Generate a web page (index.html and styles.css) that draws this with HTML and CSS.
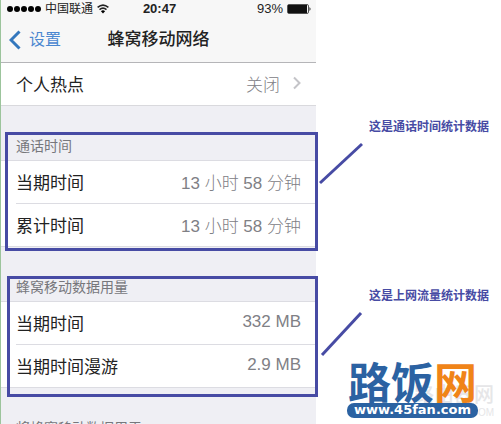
FILE: index.html
```html
<!doctype html>
<html lang="zh-CN">
<head>
<meta charset="utf-8">
<title>蜂窝移动网络</title>
<link rel="stylesheet" href="styles.css">
</head>
<body>
<div class="page">
	<div class="phone">
		<div class="status">
			<div class="carrier">
				<svg class="signal" width="34" height="8" viewBox="0 0 34 8"><circle cx="3" cy="4" r="3"/><circle cx="10" cy="4" r="3"/><circle cx="17" cy="4" r="3"/><circle cx="24" cy="4" r="3"/><circle cx="31" cy="4" r="3"/></svg>
				<span>中国联通</span>
				<svg class="wifi" width="12" height="10" viewBox="0 0 12 10"><path d="M.6 3.4Q6-1.2 11.4 3.4M2.5 5.6Q6 2.6 9.5 5.6" fill="none" stroke="#222" stroke-width="1.5"/><path d="M3.9 7.2Q6 5.4 8.1 7.2L6 9.5z"/></svg>
			</div>
			<div class="time">20:47</div>
			<div class="power">
				<span>93%</span>
				<svg width="25" height="10" viewBox="0 0 25 10"><rect x=".5" y=".5" width="21" height="9" rx="1.5" fill="none" stroke="#555"/><rect x="1" y="1" width="19" height="8" fill="#111"/><path d="M22.5 3q2 2 0 4z" fill="#111"/></svg>
			</div>
		</div>
		<div class="nav">
			<a class="back" href="#"><svg width="12" height="20" viewBox="0 0 12 20"><path d="M10.5 1.5L2 10l8.500 8.500" fill="none" stroke="#3377bd" stroke-width="3"/></svg>设置</a>
			<h1>蜂窝移动网络</h1>
		</div>
		<a class="row link" href="#"><span>个人热点</span><span class="value">关闭<svg width="8" height="14" viewBox="0 0 8 14"><path d="M1 1.500L6.500 7 1 12.500" fill="none" stroke="#c4c4c8" stroke-width="2"/></svg></span></a>
		<section class="group">
			<h2>通话时间</h2>
			<div class="list">
				<div class="row"><span>当期时间</span><span class="value">13 小时 58 分钟</span></div>
				<div class="row"><span>累计时间</span><span class="value">13 小时 58 分钟</span></div>
			</div>
			<div class="mark"></div>
		</section>
		<section class="group">
			<h2>蜂窝移动数据用量</h2>
			<div class="list">
				<div class="row"><span>当期时间</span><span class="value">332 MB</span></div>
				<div class="row"><span>当期时间漫游</span><span class="value">2.9 MB</span></div>
			</div>
			<div class="mark data"></div>
		</section>
		<section class="group">
			<h2>将蜂窝移动数据用于</h2>
		</section>
	</div>
	<div class="notes">
		<div class="note">
			<p>这是通话时间统计数据</p>
			<svg width="46" height="43" viewBox="0 0 46 43"><path d="M2 41L44 2"/></svg>
		</div>
		<div class="note">
			<p>这是上网流量统计数据</p>
			<svg width="46" height="46" viewBox="0 0 46 46"><path d="M4 44L43 2"/></svg>
		</div>
	</div>
	<div class="ghost"><b>路由器网</b><span>.COM</span></div>
	<div class="logo">
		<div class="name">路饭<span>网</span></div>
		<div class="url">www.45fan.com</div>
	</div>
</div>
</body>
</html>
```
FILE: styles.css
```css
*{box-sizing:border-box;}
html,body{height:100%;}
body{margin:0;overflow:hidden;background:#fff;font-family:"Liberation Sans","Noto Sans CJK SC",sans-serif;color:#222;}
h1,h2,p{margin:0;}
a{color:inherit;text-decoration:none;}
svg{display:block;}
.page{position:relative;display:grid;grid-template-columns:316fr 185fr;height:100vh;overflow:hidden;}

.phone{min-width:0;border-left:1px solid #9cc49c;background:#efeff4;}
.status{display:grid;grid-template-columns:1fr auto 1fr;align-items:center;height:18px;padding:0 4px 0 6px;background:#f7f7f7;font-size:12px;line-height:18px;}
.carrier,.power{display:flex;align-items:center;gap:4px;white-space:nowrap;}
.power{justify-content:flex-end;font-size:13px;}
.time{font-size:13px;font-weight:bold;}
.nav{position:relative;display:flex;align-items:center;justify-content:center;height:45px;padding-bottom:1px;background:#f7f7f7;border-bottom:1px solid #b5b5b8;}
.nav h1{font-size:17px;line-height:24px;font-weight:500;}
.back{position:absolute;left:8px;display:flex;align-items:center;gap:8px;color:#4a87d0;font-size:16px;line-height:24px;}
.row{display:flex;align-items:center;justify-content:space-between;height:43px;padding:0 15px 2px 0;font-size:17px;white-space:nowrap;}
.value{display:flex;align-items:center;gap:13px;color:#808085;font-weight:300;}
.link{padding-left:15px;background:#fff;border-bottom:1px solid #d9d9dd;}

.group{position:relative;padding-top:29px;}
.group h2{height:25px;padding-left:15px;font-size:14px;line-height:22px;font-weight:normal;color:#77777c;}
.list{padding-left:15px;background:#fff;border-top:1px solid #dcdce2;border-bottom:1px solid #dcdce2;}
.list .row{height:42px;}
.list .row + .row{height:43px;border-top:1px solid #dcdce2;}
.mark{position:absolute;left:4px;right:-2px;top:26px;bottom:-4px;border:3px solid #474ba4;}
.mark.data{left:6px;top:29px;bottom:-9px;}

.notes{padding:117px 0 0 2px;color:#474ba4;}
.note{height:169px;}
.note p{padding-left:51px;font-size:12px;line-height:20px;font-weight:bold;white-space:nowrap;}
.note svg{margin-top:5px;fill:none;stroke:#474ba4;stroke-width:3;}

.ghost,.logo{position:absolute;}
.ghost{right:7px;bottom:5px;color:#e6e6e8;text-align:right;}
.ghost b{display:block;font-size:20px;line-height:24px;font-weight:500;}
.ghost span{display:block;font-size:10px;line-height:12px;}
.logo{right:23px;bottom:6px;width:131px;}
.name{padding-left:1px;font-size:43px;line-height:38px;font-weight:bold;color:#2b62a2;white-space:nowrap;}
.name span{color:#f08418;}
.url{height:15px;border-radius:7px;background:#2b62a2;color:#fff;font:bold 13px/14px "DejaVu Sans",sans-serif;text-align:center;}
```
